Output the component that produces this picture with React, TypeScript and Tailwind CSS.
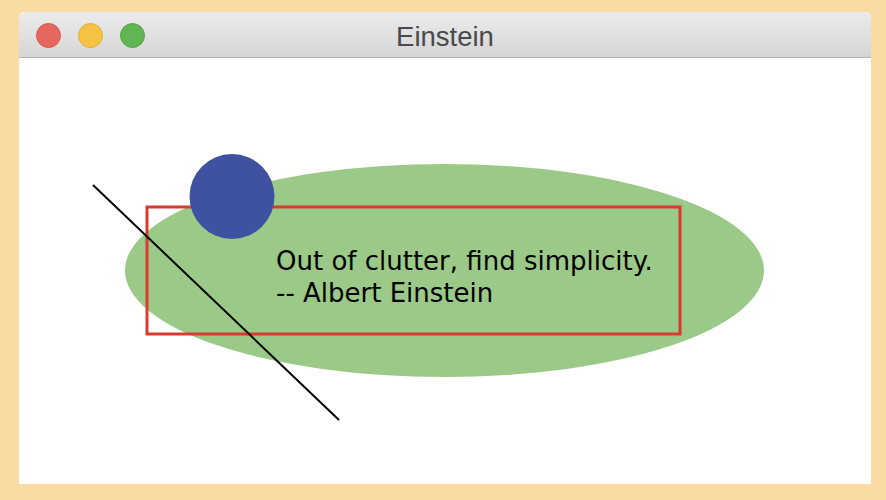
export default function App() {
  return (
    <div className="w-[886px] h-[500px] bg-[#f9dba3] pl-[19px] pt-[12px]">
      <div className="w-[852px] h-[472px] bg-white flex flex-col overflow-hidden rounded-t-[5px]">
        {/* title bar */}
        <div className="relative h-[46px] shrink-0 flex items-center justify-center bg-gradient-to-b from-[#ececec] to-[#d5d5d5] border-b border-[#b5b5b5]">
          <div className="absolute left-[17px] top-[11px] flex gap-[17px]">
            <div className="w-[25px] h-[25px] rounded-full bg-[#e5675e] border border-[#d8574e]" />
            <div className="w-[25px] h-[25px] rounded-full bg-[#f6c244] border border-[#e3ad36]" />
            <div className="w-[25px] h-[25px] rounded-full bg-[#62b553] border border-[#55a547]" />
          </div>
          <span className="text-[27.5px] text-[#4a4a4a] font-['Liberation_Sans',sans-serif] leading-none mt-[4px]">
            Einstein
          </span>
        </div>
        {/* canvas */}
        <svg width="852" height="426" viewBox="0 0 852 426" className="block">
          <ellipse cx="425.5" cy="212.5" rx="319.5" ry="106.5" fill="#9bc987" />
          <rect x="128" y="149" width="533" height="127" fill="none" stroke="#dc3a2f" strokeWidth="3" />
          <circle cx="213" cy="138.5" r="42.5" fill="#3f51a1" />
          <text x="257" y="212" fontFamily="DejaVu Sans, sans-serif" fontSize="26" fill="#000">
            Out of clutter, find simplicity.
          </text>
          <text x="257" y="244" fontFamily="DejaVu Sans, sans-serif" fontSize="26" fill="#000">
            -- Albert Einstein
          </text>
          <line x1="74" y1="127" x2="320" y2="362" stroke="#000" strokeWidth="2" />
        </svg>
      </div>
    </div>
  );
}
